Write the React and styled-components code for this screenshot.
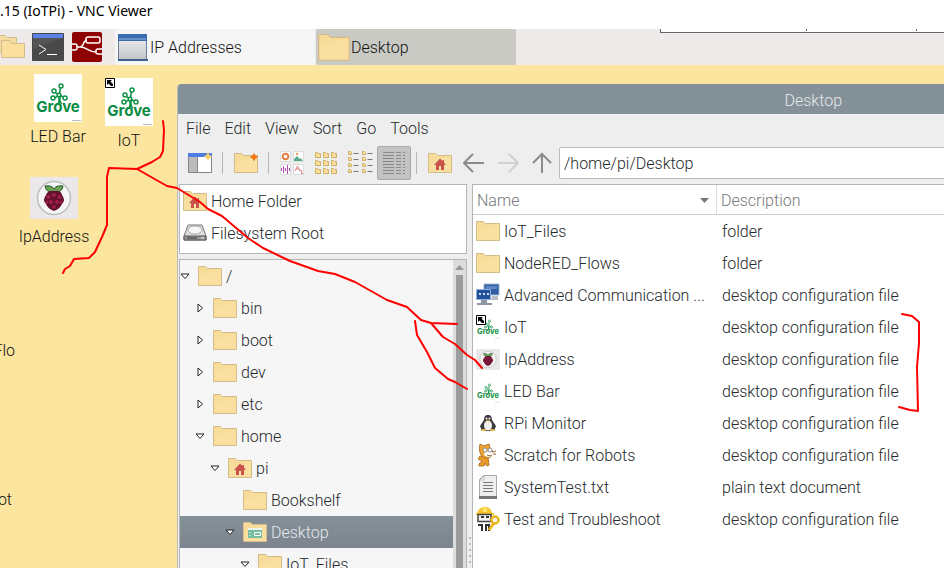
import React from "react";
import styled, { createGlobalStyle, css } from "styled-components";

const GlobalStyle = createGlobalStyle`
  * { box-sizing: border-box; }
  html, body, #root { height: 100%; margin: 0; }
  body {
    overflow: hidden;
    font-family: Roboto, "Liberation Sans", sans-serif;
    font-size: 16px;
    font-weight: 300;
    color: #24292c;
  }
  button, input { font: inherit; color: inherit; }
  svg { display: block; flex: none; }
`;

const Screen = styled.div`
  position: relative;
  display: flex;
  flex-direction: column;
  height: 100vh;
  overflow: hidden;
  background: #fbe59f;
`;

const ViewerTitle = styled.header`
  flex: none;
  height: 29px;
  padding-top: 1px;
  background: #fff;
  color: #000;
  font: 400 14px/20px "Noto Sans", "Open Sans", sans-serif;
  white-space: nowrap;
`;

const Taskbar = styled.nav`
  flex: none;
  display: flex;
  align-items: center;
  height: 36px;
  background: #eeeae9;
`;

const Launchers = styled.div`
  display: flex;
  align-items: center;
  gap: 7px;
  width: 115px;
`;

const Launcher = styled.button`
  border: 0;
  padding: 0;
  background: none;
`;

const TaskButton = styled.button`
  display: flex;
  align-items: center;
  gap: 1px;
  width: 200px;
  height: 36px;
  margin-right: 1px;
  padding: 0 2px;
  border: 0;
  border-radius: 2px;
  background: ${(p) => (p.$active ? "#c9cac4" : "#f6f6f6")};
  color: #111;
`;

const Notebook = styled.div`
  display: flex;
  align-self: flex-start;
  flex: 1;
  height: 4px;
  margin-left: 143px;
  border: solid #666;
  border-width: 0 0 1px 1px;
  background: #fff;
`;

const NotebookTab = styled.span`
  width: ${(p) => p.$width}px;
  height: 2px;
  border-right: 1px solid #666;
`;

const Desktop = styled.main`
  position: relative;
  flex: 1;
  display: flex;
  min-height: 0;
  padding: 19px 0 0 177px;
`;

const DesktopItem = styled.button`
  position: absolute;
  left: ${(p) => p.$x}px;
  top: ${(p) => p.$y}px;
  display: flex;
  flex-direction: column;
  align-items: center;
  gap: ${(p) => p.$gap || 5}px;
  width: 80px;
  border: 0;
  padding: 0;
  background: none;
  color: #111;
  line-height: 20px;
  white-space: nowrap;
`;

const CutLabel = styled.span`
  position: absolute;
  left: 0;
  top: ${(p) => p.$y}px;
  display: flex;
  justify-content: flex-end;
  width: ${(p) => p.$width}px;
  color: #111;
  line-height: 20px;
`;

const Window = styled.section`
  flex: 1;
  display: flex;
  flex-direction: column;
  min-width: 0;
  border-left: 1px solid #b9b9c0;
  border-top-left-radius: 4px;
  overflow: hidden;
  background: #eee;
`;

const TitleBar = styled.h1`
  flex: none;
  display: flex;
  align-items: center;
  justify-content: flex-end;
  height: 30px;
  margin: 0 0 0 -1px;
  padding: 2px 102px 0 0;
  background: #859199;
  color: #e6e8ea;
  font-size: 16px;
  font-weight: 300;
`;

const MenuBar = styled.div`
  display: flex;
  height: 32px;
  padding: 0 1px;
`;

const MenuButton = styled.button`
  border: 0;
  padding: 0 7px;
  background: none;
  line-height: 30px;
  height: 30px;
`;

const Toolbar = styled.div`
  display: flex;
  align-items: center;
  height: 34px;
  margin-bottom: 4px;
  padding-left: 5px;
`;

const ToolButton = styled.button`
  display: flex;
  align-items: center;
  justify-content: center;
  width: 34px;
  height: 34px;
  padding: 0;
  border: 1px solid ${(p) => (p.$active ? "#aaa" : "transparent")};
  border-radius: 2px;
  background: ${(p) => (p.$active ? "#c3c3c3" : "none")};
`;

const Divider = styled.span`
  width: 2px;
  height: 22px;
  margin: 0 5px;
  border-left: 1px solid #b5b5b5;
`;

const PathInput = styled.input`
  flex: 1;
  min-width: 0;
  height: 32px;
  margin-right: -2px;
  padding: 0 4px;
  border: 1px solid #bbb;
  border-radius: 2px;
  background: #fff;
`;

const Body = styled.div`
  flex: 1;
  display: flex;
  min-height: 0;
  padding-left: 1px;
`;

const Sidebar = styled.aside`
  flex: none;
  display: flex;
  flex-direction: column;
  gap: 5px;
  width: 288px;
`;

const panel = css`
  border: 1px solid #b5b5b5;
  background: #fff;
`;

const Places = styled.ul`
  ${panel}
  flex: none;
  margin: 0;
  padding: 0 0 4px;
  list-style: none;
`;

const Place = styled.li`
  display: flex;
  align-items: center;
  gap: 4px;
  height: 32px;
  padding-left: 3px;
`;

const TreePanel = styled.div`
  ${panel}
  flex: 1;
  display: flex;
  min-height: 0;
  overflow: hidden;
  background: #f6f6f6;
  border-bottom: 0;
`;

const Tree = styled.ul`
  flex: 1;
  margin: 0;
  padding: 0;
  list-style: none;
`;

const TreeRow = styled.li`
  display: flex;
  align-items: center;
  height: 32px;
  padding-left: ${(p) => p.$depth * 15}px;
  ${(p) => p.$selected && css`
    background: linear-gradient(#859199, #7c848e);
    color: #e6e8ea;
  `}
`;

const Expander = styled.span`
  display: flex;
  justify-content: center;
  width: 10px;
  margin-right: 8px;
`;

const TreeName = styled.span`
  margin-left: 4px;
`;

const ScrollTrack = styled.div`
  display: flex;
  flex-direction: column;
  align-items: center;
  gap: 5px;
  width: 13px;
  padding-top: 5px;
  background: #ddd;
`;

const ScrollThumb = styled.div`
  flex: 1;
  width: 7px;
  background: #9c9c9c;
`;

const Splitter = styled.div`
  display: flex;
  flex-direction: column;
  justify-content: flex-end;
  align-items: center;
  gap: 4px;
  width: 5px;
  padding-bottom: 5px;
`;

const Grip = styled.i`
  width: 2px;
  height: 2px;
  background: #bbb;
`;

const ListPanel = styled.div`
  flex: 1;
  min-width: 0;
  border: solid #b5b5b5;
  border-width: 1px 0 0 1px;
  background: #fff;
`;

const FileTable = styled.table`
  width: 100%;
  table-layout: fixed;
  border-collapse: separate;
  border-spacing: 0;
`;

const HeadCell = styled.th`
  width: ${(p) => p.$width || "auto"};
  height: 30px;
  padding: 1px 7px 0 4px;
  border-bottom: 1px solid #ccc;
  border-right: 1px solid #ddd;
  color: #777;
  font-weight: 300;
  text-align: left;
  &:last-child { border-right: 0; }
`;

const HeadContent = styled.span`
  display: flex;
  align-items: center;
  justify-content: space-between;
`;

const Cell = styled.td`
  height: 32px;
  padding: 0 0 0 5px;
  white-space: nowrap;
`;

const NameContent = styled.span`
  display: flex;
  align-items: center;
  gap: 4px;
  margin-left: -2px;
`;

const Scribble = styled.svg`
  position: absolute;
  left: 0;
  top: 0;
  pointer-events: none;
`;

const House = () => (
  <g>
    <path d="M12 5.5 6 12h2v5h3v-4h2v4h3v-5h2l-2-2.200V7h-1.500v1z" fill="#c9524c" />
  </g>
);

const Folder = ({ width = 24, height = 20, children }) => (
  <svg width={width} height={height} viewBox="0 0 24 20" preserveAspectRatio="none">
    <path d="M.5 19.500V.5h7l2 2h14v17z" fill="#f9dfa0" stroke="#d4bb8c" />
    <path d="M1 10 1 1h6l2 2h14z" fill="#f5d993" opacity=".55" />
    {children}
  </svg>
);

const HomeFolder = () => <Folder><House /></Folder>;

const DesktopFolder = () => (
  <Folder>
    <path d="M5 6h14v10H5z" fill="#79bda0" />
    <path d="M5 6h14v2H5z" fill="#e9f3e8" />
    <path d="M11.500 10.500h6v3h-6z" fill="#79bda0" stroke="#fff" />
    <path d="M7 10v1M7 13v1" stroke="#fff" />
  </Folder>
);

const FolderPair = () => (
  <svg width="25" height="24" viewBox="0 0 25 24">
    <path d="M-4 17V.5h9l2 2h9.500V17z" fill="#f3dc9f" stroke="#d4bb8c" />
    <path d="M1.500 22.500v-17h8l2 3h13v14z" fill="#fadf9e" stroke="#d4bb8c" />
  </svg>
);

const Terminal = () => (
  <svg width="32" height="28" viewBox="0 0 32 28">
    <path d="M.5.5h31v27H.5z" fill="#555" stroke="#414751" />
    <path d="M1 27V16L31 5v22z" fill="#494949" />
    <path d="M1 1h30v4H1z" fill="#5c83e4" />
    <path d="m7 12 7 4.500-7 4.500M15 21.500h10" fill="none" stroke="#fff" />
  </svg>
);

const NodeRed = () => (
  <svg width="31" height="30" viewBox="0 0 31 30">
    <rect x="1" width="30" height="30" rx="2" fill="#8f0000" />
    <g fill="none" stroke="#fff" strokeWidth="1.500">
      <rect x="15" y="5" width="14" height="6" rx="2" />
      <path d="M1 12h3q2 0 2 2v2q0 2-2 2H1M31 17h-4q-2 0-2 2v1q0 2 2 2h4M6 15h3c4 0 3-7 7-7M9 15c7 0 8 5 16 5" />
    </g>
  </svg>
);

const AppWindow = () => (
  <svg width="32" height="29" viewBox="0 0 32 29">
    <defs>
      <linearGradient id="pane" x2="0" y2="1"><stop stopColor="#f4f4f4" /><stop offset="1" stopColor="#bfc1c4" /></linearGradient>
    </defs>
    <path d="M1.500 1.500h28v26h-28z" fill="url(#pane)" stroke="#6b7f9d" />
    <path d="M1 1h29v7H1z" fill="#3c6cae" />
    <path d="M2 5h27v2H2z" fill="#6591c8" />
    <path d="M1 27h30" stroke="#3e5f92" strokeWidth="2" />
  </svg>
);

const LinkBadge = () => (
  <g>
    <path d="M.5.5h9v9h-9z" fill="#fff" stroke="#000" />
    <path d="M2 2h5L5.500 3.500 8 6v2H6L3.500 5.500 2 7z" fill="#000" />
  </g>
);

const Grove = ({ size = 48, link }) => (
  <svg width={size} height={size} viewBox="0 0 48 48">
    <path d="M0 0h48v48H0z" fill="#fff" />
    <g fill="none" stroke="#0b9245" strokeWidth="1.500">
      <circle cx="27" cy="12" r="2" /><circle cx="20" cy="17" r="2" />
      <circle cx="19" cy="24" r="2" /><circle cx="31" cy="24" r="2" />
      <circle cx="25" cy="21" r="1.800" />
      <path d="m26.500 14-1 5M21.500 18.500l2 1.500M21 24l2.500-2M29 23l-2.500-1.500" />
      <path d="M25 22v5q0 3-3 4M25 24v5M26 22v4q0 3 2 4" strokeWidth="1.500" />
    </g>
    <text x="24" y="38" textAnchor="middle" fontFamily="Inter, sans-serif" fontSize="15" fontWeight="700" fill="#0b8c42">Grove</text>
    <path d="M38 46.500h9" stroke="#bbb" />
    {link && (size > 30 ? <LinkBadge /> : <g transform="scale(2)"><LinkBadge /></g>)}
  </svg>
);

const Raspberry = ({ width = 48, height = 42 }) => (
  <svg width={width} height={height} viewBox="0 0 48 42">
    <path d="M0 0h48v42H0z" fill="#ebe8e9" />
    <circle cx="24" cy="21" r="16.500" fill="#f5f5f5" stroke="#babdbf" strokeWidth="1.500" />
    <path d="M24 15q-8 1-9-6 7-1 9 3 2-4 9-3-1 7-9 6z" fill="#6aa653" stroke="#28552c" />
    <path d="M24 14q7-1 8 4 4 5 0 9-2 5-8 7-6-2-8-7-4-4 0-9 2-5 8-4z" fill="#651030" />
    <g fill="#a3204a">
      <circle cx="24" cy="18" r="2" /><circle cx="18.500" cy="20" r="2" /><circle cx="29.500" cy="20" r="2" />
      <circle cx="21" cy="25" r="2" /><circle cx="27" cy="25" r="2" /><circle cx="24" cy="30" r="1.800" />
      <circle cx="17" cy="25" r="1.500" /><circle cx="31" cy="25" r="1.500" />
    </g>
  </svg>
);

const Drive = () => (
  <svg width="24" height="20" viewBox="0 0 24 20">
    <path d="M5 2h14l4 11v4H1v-4z" fill="#ddd" stroke="#777" />
    <ellipse cx="12" cy="7" rx="7" ry="4" fill="#f7f7f7" stroke="#aaa" />
    <path d="M1 13h22v4H1z" fill="#999" stroke="#555" />
    <path d="M4 15h10" stroke="#333" /><path d="M18 15h3" stroke="#eee" />
  </svg>
);

const Star = () => <path d="m20 0 1.500 3 3 1.500-3 1.500L20 9l-1.500-3-3-1.500 3-1.500z" fill="#f6cf69" />;

const NewWindow = () => (
  <svg width="25" height="22" viewBox="0 0 25 22">
    <path d="M.5 1.500h23v19H.5z" fill="#fff" stroke="#858585" />
    <path d="M1 5h8v15H1z" fill="#bbb" /><path d="M9.500 5v15" stroke="#888" />
    <path d="M0 1h24v4H0z" fill="#4f7be5" /><Star />
  </svg>
);

const NewFolder = () => (
  <Folder>
    <path d="m20 .5 1.200 2.300 2.300 1.200-2.300 1.200L20 7.500l-1.200-2.300L16.500 4l2.300-1.200z" fill="#f07818" stroke="#f07818" />
  </Folder>
);

const Thumbnails = () => (
  <svg width="24" height="24" viewBox="0 0 24 24">
    <path d="M.5.5h10v10H.5zM13.500.5h10v10h-10zM.5 13.500h10v10H.5zM13.500 13.500h10v10h-10z" fill="#fff" stroke="#ddd" />
    <circle cx="5.500" cy="5.500" r="2.800" fill="#fff" stroke="#e18344" strokeWidth="2" />
    <path d="M14 10V8l3-3 3 3 1-1 2 3z" fill="#5daa8b" /><circle cx="17" cy="3" r="1.300" fill="#efa55e" />
    <path d="M1.500 17v3M3.500 15v7M5.500 17v3M7.500 14v9M9.500 17v3" stroke="#b04fb0" />
    <path d="m15 20 2.500-5 2.500 5M16 18h3M20 19l2 1-1 2 2 1" fill="none" stroke="#dc7a7a" />
  </svg>
);

const MiniFolder = ({ x, y, w = 5 }) => (
  <path d={`M${x} ${y}h2l1 1h${w - 3}v${w - 1}h-${w}z`} fill="#f9dc96" stroke="#cfae68" />
);

const IconGrid = () => (
  <svg width="24" height="24" viewBox="0 0 24 24">
    {[1.5, 9.5, 17.5].map((y) => [1.5, 9.5, 17.5].map((x) => <MiniFolder key={`${x}-${y}`} x={x} y={y} />))}
  </svg>
);

const CompactList = () => (
  <svg width="26" height="24" viewBox="0 0 26 24">
    {[0.5, 6.5, 12.5, 18.5].map((y) => [1.5, 15.5].map((x) => (
      <g key={`${x}-${y}`}><MiniFolder x={x} y={y} w={3} /><path d={`M${x + 5} ${y + 2}h5`} stroke="#777" /></g>
    )))}
  </svg>
);

const DetailList = () => (
  <svg width="24" height="24" viewBox="0 0 24 24">
    {[1.5, 4.5, 7.5, 10.5, 13.5, 16.5, 19.5, 22.5].map((y) => (
      <path key={y} d={`M1 ${y}h11M14 ${y}h5M21 ${y}h2`} stroke="#888" />
    ))}
  </svg>
);

const Arrow = ({ d, color = "#8b8b8b" }) => (
  <svg width="22" height="22" viewBox="0 0 22 22">
    <path d={d} fill="none" stroke={color} strokeWidth="2" />
  </svg>
);

const Computers = () => (
  <svg width="24" height="24" viewBox="0 0 24 24">
    <path d="M8 1h15v11H8z" fill="#335c9e" stroke="#9db8df" />
    <path d="M10 3h11v3H10z" fill="#5f87c4" />
    <path d="M16 13h6v4h-7z" fill="#b8bcc4" />
    <path d="M.5 6.500h14v10H.5z" fill="#244f99" stroke="#8fb0dd" />
    <path d="M3 10h2v2H3zM7 10h2v2H7zM11 10h2v2h-2z" fill="#cadcf5" />
    <path d="M5 17h6v3h5v2H1v-2h4z" fill="#8e95a2" />
  </svg>
);

const Penguin = () => (
  <svg width="24" height="24" viewBox="0 0 24 24">
    <path d="M12 4c3 0 4 2 4 5l4 6-2 5H6l-2-5 4-6c0-3 1-5 4-5z" fill="#3b3b3b" />
    <ellipse cx="12" cy="14.500" rx="4" ry="5" fill="#f2f1ed" />
    <circle cx="10.500" cy="7.500" r="1" fill="#fff" /><circle cx="13.500" cy="7.500" r="1" fill="#fff" />
    <path d="m10 9 2 2 2-2z" fill="#d9a93c" /><path d="M5 18h5v2H5zM14 18h5v2h-5z" fill="#d9b45b" />
  </svg>
);

const Cat = () => (
  <svg width="24" height="24" viewBox="0 0 24 24">
    <path d="m4 13-2 3 4 2-3 3v2h5l1-3 2 3 2-1-1-7z" fill="#ea9c2a" stroke="#b4752b" />
    <path d="m4 1 4 2 5-2 1 4q4 3 2 8-5 4-9 1Q2 10 4 1z" fill="#efa42d" stroke="#b4752b" />
    <ellipse cx="13" cy="11" rx="5" ry="3" fill="#fff" />
    <circle cx="9" cy="7" r="2" fill="#fff" stroke="#888" /><circle cx="14" cy="7" r="2" fill="#fff" stroke="#888" />
    <path d="m16 9 4-1M17 11h3M11 12l3 1 2-1" fill="none" stroke="#926330" />
  </svg>
);

const TextFile = () => (
  <svg width="24" height="24" viewBox="0 0 24 24">
    <path d="M3.500 23.500v-19l4-4h13v23z" fill="#eee" stroke="#aaa" />
    <path d="M3 21h18v3H3z" fill="#777" /><path d="m4 5 4-4v4z" fill="#fff" stroke="#bbb" />
    <path d="M7 7.500h10M7 10.500h10M7 13.500h10M7 16.500h10" stroke="#777" />
  </svg>
);

const Worker = () => (
  <svg width="24" height="24" viewBox="0 0 24 24">
    <path d="M1 6q2-6 8-6t7 6h2v2H0V6z" fill="#f6c52c" /><path d="M7 1h4v4H7z" fill="#ffe16d" />
    <path d="M2 7.500h13v7H2z" fill="#f4f4f4" stroke="#444" strokeWidth="1.500" />
    <path d="M5 9h3v2H5zM10 9h3v2h-3z" fill="#333" /><path d="M2 18h4v6M10 24v-6h3v6" fill="none" stroke="#333" strokeWidth="2" />
    <path d="m13 23 5-7" stroke="#e9b622" strokeWidth="3" /><circle cx="19" cy="13" r="3.500" fill="#fff" stroke="#e9b622" strokeWidth="2.500" />
  </svg>
);

const triangles = {
  open: <svg width="10" height="7" viewBox="0 0 10 7"><path d="M1 1h8L5 5.500z" fill="#fff" stroke="#222" /></svg>,
  closed: <svg width="7" height="10" viewBox="0 0 7 10"><path d="M1 1v8l4.500-4z" fill="#fff" stroke="#222" /></svg>,
};

const tree = [
  { name: "/", depth: 0, state: "open", Icon: Folder },
  { name: "bin", depth: 1, state: "closed", Icon: Folder },
  { name: "boot", depth: 1, state: "closed", Icon: Folder },
  { name: "dev", depth: 1, state: "closed", Icon: Folder },
  { name: "etc", depth: 1, state: "closed", Icon: Folder },
  { name: "home", depth: 1, state: "open", Icon: Folder },
  { name: "pi", depth: 2, state: "open", Icon: HomeFolder },
  { name: "Bookshelf", depth: 3, Icon: Folder },
  { name: "Desktop", depth: 3, state: "open", Icon: DesktopFolder, selected: true },
  { name: "IoT_Files", depth: 4, state: "open", Icon: Folder },
];

const config = "desktop configuration file";
const files = [
  ["IoT_Files", "folder", <Folder />],
  ["NodeRED_Flows", "folder", <Folder />],
  ["Advanced Communication ...", config, <Computers />],
  ["IoT", config, <Grove size={24} link />],
  ["IpAddress", config, <Raspberry width={24} height={21} />],
  ["LED Bar", config, <Grove size={24} />],
  ["RPi Monitor", config, <Penguin />],
  ["Scratch for Robots", config, <Cat />],
  ["SystemTest.txt", "plain text document", <TextFile />],
  ["Test and Troubleshoot", config, <Worker />],
];

const tools = [
  ["New window", <NewWindow />], null,
  ["New folder", <NewFolder />], null,
  ["Thumbnail view", <Thumbnails />],
  ["Icon view", <IconGrid />],
  ["Compact view", <CompactList />],
  ["Detailed list view", <DetailList />, true], null,
  ["Home", <HomeFolder />],
  ["Back", <Arrow d="M21 11H2M10 2l-9 9 9 9" />],
  ["Forward", <Arrow d="M1 11h19M12 2l9 9-9 9" color="#d0d0d0" />],
  ["Up", <Arrow d="M11 21V2M2 11l9-9 9 9" />],
];

const strokes = [
  "M163 121 164 130 163 151 160 157 152 162 137 169 109 168 107 177 107 225 102 237 95 252 89 258 74 259 70 266 65 269 63 273",
  "M137 169 167 186 177 188 200 202 208 209 222 216 235 227 248 238 263 248 290 261 318 271 335 274 355 282 387 300 407 307 421 320 431 323 457 324",
  "M431 323 443 337 455 344 467 355 475 360 482 368",
  "M415 321 417 335 427 352 435 368 448 379 455 382 467 389",
  "M902 314 912 316 919 322 919 343 917 367 918 411 910 410 899 407",
];

export default function App() {
  return (
    <Screen>
      <GlobalStyle />
      <ViewerTitle>.15 (IoTPi) - VNC Viewer</ViewerTitle>
      <Taskbar>
        <Launchers>
          <Launcher aria-label="File manager"><FolderPair /></Launcher>
          <Launcher aria-label="Terminal"><Terminal /></Launcher>
          <Launcher aria-label="Node-RED"><NodeRed /></Launcher>
        </Launchers>
        <TaskButton><AppWindow />IP Addresses</TaskButton>
        <TaskButton $active><Folder width={32} height={27} />Desktop</TaskButton>
        <Notebook><NotebookTab $width={146} /><NotebookTab $width={110} /></Notebook>
      </Taskbar>
      <Desktop>
        <DesktopItem $x={18} $y={9}><Grove />LED Bar</DesktopItem>
        <DesktopItem $x={89} $y={13}><Grove link />IoT</DesktopItem>
        <DesktopItem $x={14} $y={112} $gap={8}><Raspberry />IpAddress</DesktopItem>
        <CutLabel $y={276} $width={15}>Flo</CutLabel>
        <CutLabel $y={425} $width={12}>ot</CutLabel>
        <Window>
          <TitleBar>Desktop</TitleBar>
          <MenuBar>
            {["File", "Edit", "View", "Sort", "Go", "Tools"].map((m) => <MenuButton key={m}>{m}</MenuButton>)}
          </MenuBar>
          <Toolbar>
            {tools.map((t, i) => t
              ? <ToolButton key={i} aria-label={t[0]} $active={t[2]}>{t[1]}</ToolButton>
              : <Divider key={i} />)}
            <PathInput aria-label="Location" defaultValue="/home/pi/Desktop" />
          </Toolbar>
          <Body>
            <Sidebar>
              <Places>
                <Place><HomeFolder />Home Folder</Place>
                <Place><Drive />Filesystem Root</Place>
              </Places>
              <TreePanel>
                <Tree>
                  {tree.map(({ name, depth, state, Icon, selected }, i) => (
                    <TreeRow key={i} $depth={depth} $selected={selected}>
                      <Expander>{triangles[state]}</Expander>
                      <Icon />
                      <TreeName>{name}</TreeName>
                    </TreeRow>
                  ))}
                </Tree>
                <ScrollTrack>
                  <svg width="9" height="5" viewBox="0 0 9 5"><path d="M0 5 4.500 0 9 5z" fill="#999" /></svg>
                  <ScrollThumb />
                </ScrollTrack>
              </TreePanel>
            </Sidebar>
            <Splitter><Grip /><Grip /><Grip /><Grip /><Grip /></Splitter>
            <ListPanel>
              <FileTable>
                <thead>
                  <tr>
                    <HeadCell $width="244px">
                      <HeadContent>Name<svg width="9" height="5" viewBox="0 0 9 5"><path d="M0 0h9L4.500 5z" fill="#777" /></svg></HeadContent>
                    </HeadCell>
                    <HeadCell>Description</HeadCell>
                  </tr>
                </thead>
                <tbody>
                  {files.map(([name, kind, icon]) => (
                    <tr key={name}>
                      <Cell><NameContent>{icon}{name}</NameContent></Cell>
                      <Cell>{kind}</Cell>
                    </tr>
                  ))}
                </tbody>
              </FileTable>
            </ListPanel>
          </Body>
        </Window>
      </Desktop>
      <Scribble width="944" height="568" viewBox="0 0 944 568" aria-hidden="true">
        {strokes.map((d) => (
          <path key={d} d={d} fill="none" stroke="#fe0000" strokeWidth="2" strokeLinecap="round" strokeLinejoin="round" />
        ))}
      </Scribble>
    </Screen>
  );
}
